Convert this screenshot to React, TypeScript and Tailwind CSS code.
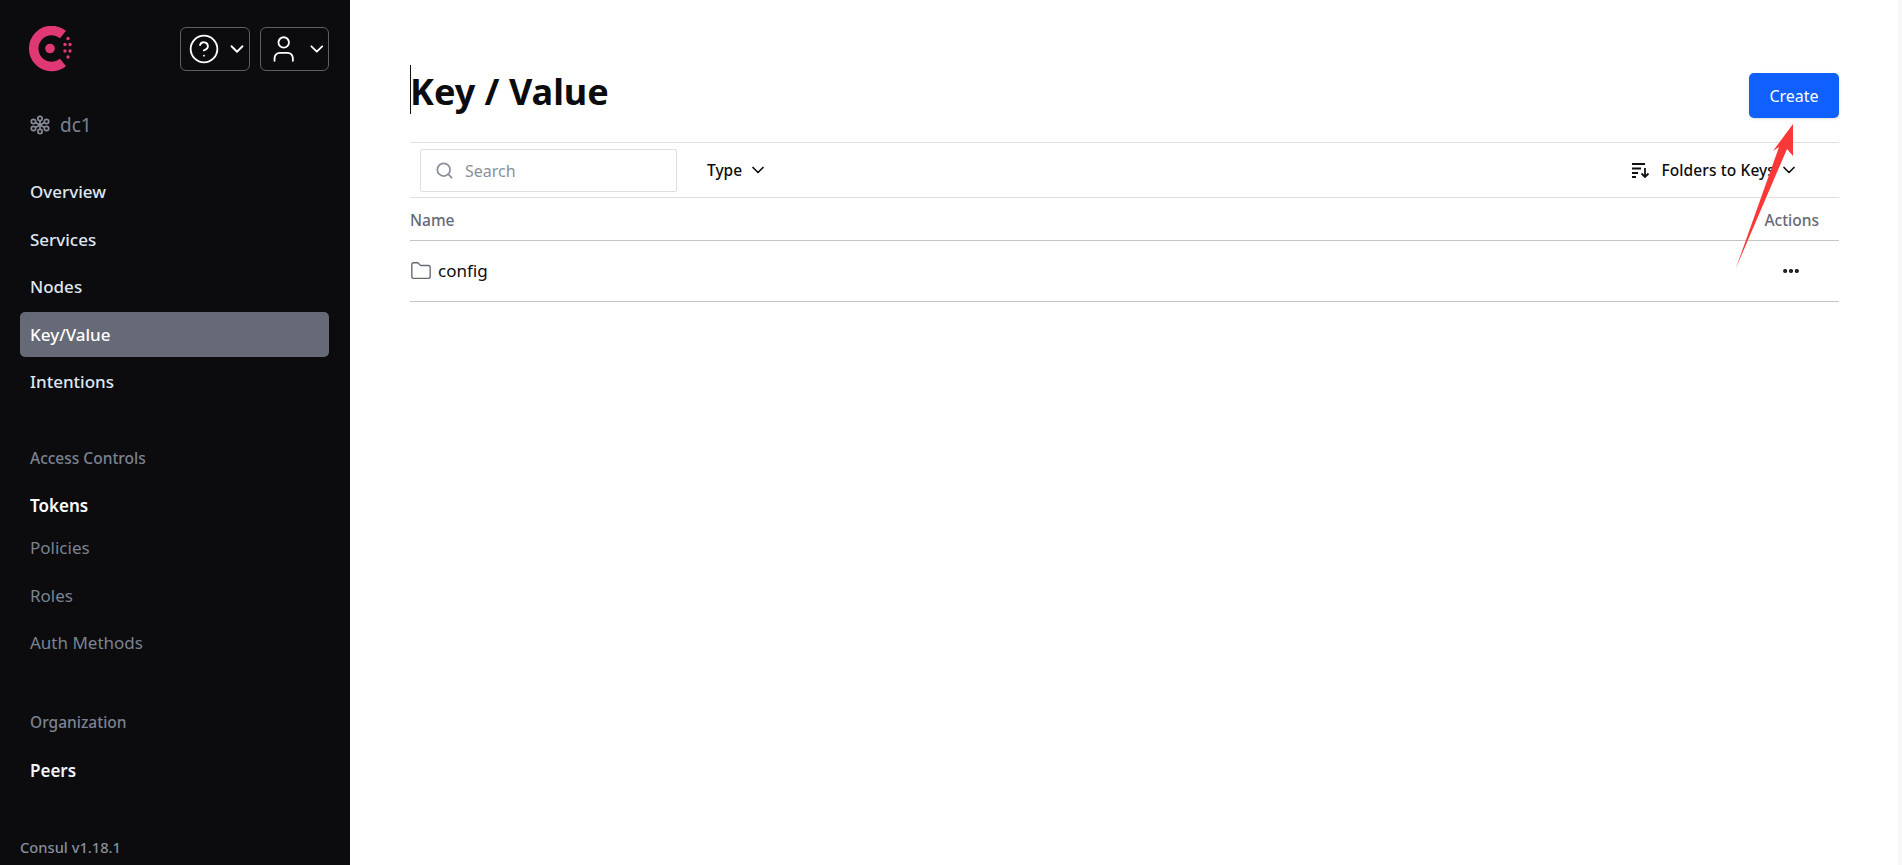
import React from "react";
import { ChevronDown, CircleHelp, Ellipsis, Folder, Search, User } from "lucide-react";

const font = { fontFamily: '"Noto Sans", "Open Sans", sans-serif' };

const ConsulLogo = () => (
  <svg width="48" height="46" viewBox="0 0 48 46" className="block">
    <path d="M35 8.5A18 18 0 1 0 35 36.5" fill="none" stroke="#e03875" strokeWidth="9.5" />
    <circle cx="22" cy="22.5" r="4.8" fill="#e03875" />
    <g fill="#e03875">
      <circle cx="40" cy="12.5" r="1.7" />
      <circle cx="37" cy="18.5" r="1.7" />
      <circle cx="42" cy="18.5" r="1.7" />
      <circle cx="37" cy="25" r="1.7" />
      <circle cx="42" cy="25" r="1.7" />
      <circle cx="40" cy="31" r="1.7" />
    </g>
  </svg>
);

const ClusterIcon = () => (
  <svg width="20" height="20" viewBox="0 0 20 20" fill="none" stroke="#858a96" strokeWidth="1.7">
    <circle cx="10" cy="3.5" r="2.2" />
    <circle cx="10" cy="16.5" r="2.2" />
    <circle cx="3.5" cy="6.5" r="2.2" />
    <circle cx="16.5" cy="6.5" r="2.2" />
    <circle cx="3.5" cy="13.5" r="2.2" />
    <circle cx="16.5" cy="13.5" r="2.2" />
    <path d="M10 6v8M5.5 7.5l9 5M14.5 7.5l-9 5" />
  </svg>
);

const SortIcon = () => (
  <svg width="18" height="16" viewBox="0 0 18 16" fill="none" stroke="#111114">
    <path d="M0 2h13M0 6.5h9M0 11h6M0 15h4" strokeWidth="2" />
    <path d="M13 6v9M9.5 11.5l3.5 3.5 3.5-3.5" strokeWidth="1.8" />
  </svg>
);

const NavLink = ({ label, className }: { label: string; className: string }) => (
  <div className={`px-[10px] text-[17px] leading-[24px] ${className}`}>{label}</div>
);

const Sidebar = () => (
  <aside className="w-[350px] h-[865px] shrink-0 bg-[#0c0c0e] pl-[20px] pr-[21px] flex flex-col">
    <div className="flex items-center pt-[26px] pl-[8px]">
      <ConsulLogo />
      <div className="ml-auto flex gap-[10px]">
        <div className="w-[70px] h-[44px] border border-[#5c5f69] rounded-[6px] flex items-center pl-[7px] gap-[6px] text-white">
          <CircleHelp size={32} strokeWidth={1.4} />
          <ChevronDown size={22} strokeWidth={2} />
        </div>
        <div className="w-[69px] h-[44px] border border-[#5c5f69] rounded-[6px] flex items-center pl-[7px] gap-[7px] text-white">
          <User size={32} strokeWidth={1.4} />
          <ChevronDown size={22} strokeWidth={2} />
        </div>
      </div>
    </div>
    <div className="flex items-center gap-[10px] pl-[10px] mt-[39px] h-[28px] text-[19px] text-[#7b8291]">
      <ClusterIcon />
      <span>dc1</span>
    </div>
    <div className="mt-[41px] flex flex-col">
      <NavLink label="Overview" className="font-medium text-[#dfe6f2]" />
      <NavLink label="Services" className="mt-[24px] font-medium text-[#dfe6f2]" />
      <NavLink label="Nodes" className="mt-[23px] font-medium text-[#dfe6f2]" />
      <div className="mt-[13px] h-[45px] rounded-[5px] bg-[#656a76] flex items-center">
        <NavLink label="Key/Value" className="font-medium text-white" />
      </div>
      <NavLink label="Intentions" className="mt-[13px] font-medium text-[#dfe6f2]" />
    </div>
    <div className="mt-[54px] px-[10px] text-[15.5px] leading-[20px] font-medium text-[#7b8291]">Access Controls</div>
    <NavLink label="Tokens" className="mt-[26px] font-semibold text-white" />
    <NavLink label="Policies" className="mt-[18px] text-[#7b8291]" />
    <NavLink label="Roles" className="mt-[24px] text-[#7b8291]" />
    <NavLink label="Auth Methods" className="mt-[23px] text-[#7b8291]" />
    <div className="mt-[57px] px-[10px] text-[15.5px] leading-[20px] font-medium text-[#7b8291]">Organization</div>
    <NavLink label="Peers" className="mt-[27px] font-semibold text-[#f0f3f8]" />
    <div className="mt-auto mb-[8px] text-[14.7px] leading-[20px] font-medium text-[#878d9b]">Consul v1.18.1</div>
  </aside>
);

const Main = () => (
  <main className="flex-1 h-[865px] bg-white pl-[60px] pr-[59px] relative border-r-4 border-[#f8f8f8]">
    <div className="flex items-start h-[142px]">
      <div className="mt-[65px] h-[49px] w-px bg-[#111114]" />
      <h1 className="mt-[65px] h-[49px] -ml-px text-[36px] leading-[54px] font-bold text-[#0c0c0e]">
        Key / Value
      </h1>
      <button className="ml-auto mt-[73px] w-[90px] h-[45px] rounded-[5px] bg-[#1060ff] text-white text-[16px] shadow-sm">
        Create
      </button>
    </div>
    <div className="h-[56px] border-y border-[#dedfe3] flex items-center pl-[10px] pr-[40px] text-[15.5px] font-medium text-[#0c0c0e]">
      <div className="w-[257px] h-[43px] border border-[#dedfe3] rounded-[2px] flex items-center pl-[14px] gap-[11px] text-[#8a8f9c] font-normal text-[16px]">
        <Search size={19} strokeWidth={2.2} />
        <span className="mt-[2px]">Search</span>
      </div>
      <span className="ml-[30px] mt-[2px]">Type</span>
      <ChevronDown size={20} strokeWidth={2} className="ml-[6px]" />
      <div className="ml-auto flex items-center">
        <SortIcon />
        <span className="ml-[11px] mt-[2px] tracking-[0.1px]">Folders to Keys</span>
        <ChevronDown size={20} strokeWidth={2} className="ml-[4px]" />
      </div>
    </div>
    <div className="h-[43px] pt-[3px] border-b border-[#c2c5cb] flex items-center justify-between pr-[20px] text-[15.5px] font-medium text-[#656a76]">
      <span>Name</span>
      <span>Actions</span>
    </div>
    <div className="h-[61px] border-b border-[#c2c5cb] flex items-center">
      <Folder size={22} strokeWidth={1.5} className="text-[#656a76]" />
      <span className="ml-[6px] text-[17px] text-[#0c0c0e]">config</span>
      <Ellipsis size={20} strokeWidth={3} className="ml-auto mr-[38px] text-[#0c0c0e]" />
    </div>
    <svg className="absolute left-[1380px] top-[120px]" width="70" height="150" viewBox="0 0 70 150">
      <path d="M6 148L49 27 43 31 63 4 63 36 57 29Z" fill="#fa3838" />
    </svg>
  </main>
);

export default function App() {
  return (
    <div className="flex w-[1902px] h-[865px] overflow-hidden" style={font}>
      <Sidebar />
      <Main />
    </div>
  );
}
